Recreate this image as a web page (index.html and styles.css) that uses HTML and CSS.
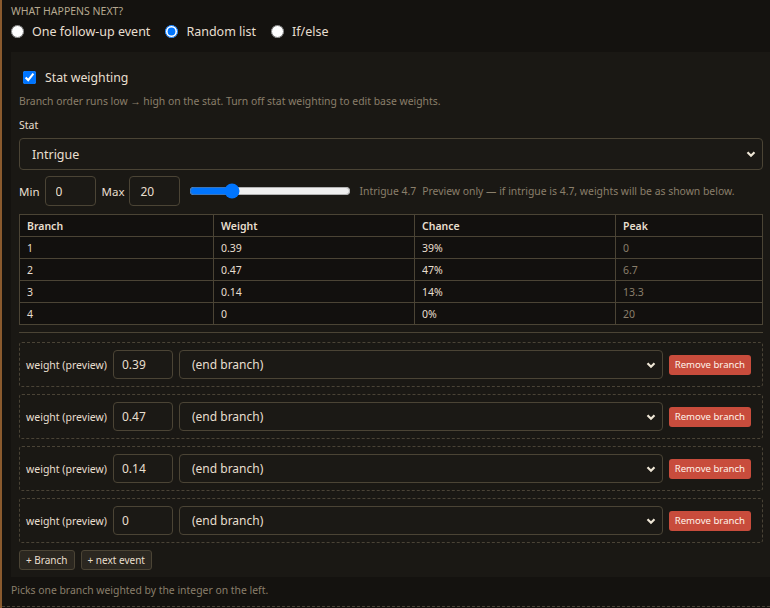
FILE: index.html
```html
<!DOCTYPE html>
<html lang="en">
<head>
    <meta charset="UTF-8">
    <title>Next step</title>
    <link rel="stylesheet" href="styles.css">
</head>
<body>
    <div class="next">
        <div class="heading">What happens next?</div>
        <div class="choices">
            <label><input type="radio" name="mode"> One follow-up event</label>
            <label><input type="radio" name="mode" checked> Random list</label>
            <label><input type="radio" name="mode"> If/else</label>
        </div>

        <div class="panel">
            <label class="check-row"><input type="checkbox" checked> Stat weighting</label>
            <div class="hint">Branch order runs low → high on the stat. Turn off stat weighting to edit base weights.</div>

            <div class="field-label">Stat</div>
            <select class="select big">
                <option>Intrigue</option>
            </select>

            <div class="range-row">
                <span>Min</span>
                <input class="input small" type="text" value="0">
                <span>Max</span>
                <input class="input small" type="text" value="20">
                <input class="range" type="range" min="0" max="20" step="0.1" value="4.7">
                <span class="muted">Intrigue 4.7</span>
                <span class="muted">Preview only — if intrigue is 4.7, weights will be as shown below.</span>
            </div>

            <table class="weights">
                <colgroup>
                    <col class="c1"><col class="c2"><col class="c3"><col class="c4">
                </colgroup>
                <thead>
                    <tr><th>Branch</th><th>Weight</th><th>Chance</th><th>Peak</th></tr>
                </thead>
                <tbody>
                    <tr><td>1</td><td>0.39</td><td>39%</td><td class="peak">0</td></tr>
                    <tr><td>2</td><td>0.47</td><td>47%</td><td class="peak">6.7</td></tr>
                    <tr><td>3</td><td>0.14</td><td>14%</td><td class="peak">13.3</td></tr>
                    <tr><td>4</td><td>0</td><td>0%</td><td class="peak">20</td></tr>
                </tbody>
            </table>

            <hr class="sep">

            <div class="branches">
                <div class="branch">
                    <span class="branch-label">weight (preview)</span>
                    <input class="input weight" type="text" value="0.39">
                    <select class="select target"><option>(end branch)</option></select>
                    <button class="remove">Remove branch</button>
                </div>
                <div class="branch">
                    <span class="branch-label">weight (preview)</span>
                    <input class="input weight" type="text" value="0.47">
                    <select class="select target"><option>(end branch)</option></select>
                    <button class="remove">Remove branch</button>
                </div>
                <div class="branch">
                    <span class="branch-label">weight (preview)</span>
                    <input class="input weight" type="text" value="0.14">
                    <select class="select target"><option>(end branch)</option></select>
                    <button class="remove">Remove branch</button>
                </div>
                <div class="branch">
                    <span class="branch-label">weight (preview)</span>
                    <input class="input weight" type="text" value="0">
                    <select class="select target"><option>(end branch)</option></select>
                    <button class="remove">Remove branch</button>
                </div>
            </div>

            <div class="actions">
                <button class="small-btn">+ Branch</button>
                <button class="small-btn">+ next event</button>
            </div>
        </div>

        <div class="footnote">Picks one branch weighted by the integer on the left.</div>
    </div>
</body>
</html>
```

FILE: styles.css
```css
html, body {
    margin: 0;
    padding: 0;
    height: 100%;
}

body {
    background: #14120f;
    border-left: 2px solid #8a5a2e;
    color: #e8dfcf;
    font-family: "Noto Sans", "Open Sans", sans-serif;
    font-size: 12px;
    overflow: hidden;
}

.next {
    padding-left: 9px;
    border-bottom: 1px dashed #4a4336;
    height: 606px;
}

.heading {
    padding-top: 4px;
    font-size: 10.5px;
    line-height: 14px;
    text-transform: uppercase;
    color: #b5a88f;
}

.choices {
    display: flex;
    align-items: center;
    gap: 15px;
    height: 22px;
    margin-top: 2px;
    font-size: 12.5px;
}

.choices label {
    display: flex;
    align-items: center;
    gap: 8px;
}

.choices input {
    margin: 0;
    width: 13px;
    height: 13px;
}

/* panel with the random list */
.panel {
    background: #1a1814;
    margin-top: 10px;
    padding: 14px 7px 7px 8px;
}

.check-row {
    display: flex;
    align-items: center;
    gap: 9px;
    height: 22px;
    padding-left: 4px;
    font-size: 12.3px;
}

.check-row input {
    margin: 0;
    width: 13px;
    height: 13px;
}

.hint {
    margin-top: 6px;
    font-size: 10.4px;
    line-height: 14px;
    color: #8a7f6b;
}

.field-label {
    margin-top: 10px;
    font-size: 10.5px;
    line-height: 14px;
}

.select {
    appearance: none;
    background: #1b1915 url("data:image/svg+xml;utf8,<svg xmlns='http://www.w3.org/2000/svg' width='10' height='10' viewBox='0 0 10 10'><path d='M1.5 3.2l3.5 3.5 3.5-3.5' fill='none' stroke='%23ece4d4' stroke-width='2.2'/></svg>") no-repeat right 6px center;
    border: 1px solid #4b4435;
    border-radius: 4px;
    color: #e8dfcf;
    font-family: inherit;
    box-sizing: border-box;
}

.select.big {
    display: block;
    width: 100%;
    height: 32px;
    margin-top: 6px;
    padding: 0 12px;
    font-size: 12.5px;
}

.input {
    background: #1b1915;
    border: 1px solid #4b4435;
    border-radius: 4px;
    color: #e8dfcf;
    font-family: inherit;
    box-sizing: border-box;
    margin: 0;
}

.range-row {
    display: flex;
    align-items: center;
    height: 30px;
    margin-top: 6px;
    font-size: 11.5px;
    white-space: nowrap;
}

.input.small {
    width: 51px;
    height: 30px;
    padding: 0 10px;
    font-size: 12px;
    margin: 0 6px 0 5px;
}

.range {
    width: 162px;
    margin: 0 8px 0 3px;
}

.muted {
    font-size: 10.4px;
    color: #8a7f6b;
    margin-right: 6px;
}

/* weights table */
.weights {
    width: 100%;
    margin-top: 8px;
    border-collapse: collapse;
    table-layout: fixed;
    background: #12100e;
    font-size: 10.5px;
}

.weights .c1 { width: 194px; }
.weights .c2 { width: 201px; }
.weights .c3 { width: 201px; }

.weights th,
.weights td {
    border: 1px solid #4b4435;
    height: 21px;
    padding: 0 7px;
    text-align: left;
}

.weights th {
    font-weight: 600;
}

.weights .peak {
    color: #8a7f6b;
}

.sep {
    border: 0;
    border-top: 1px solid #4b4435;
    margin: 7px 0 9px;
}

.branches {
    display: flex;
    flex-direction: column;
    gap: 7px;
}

.branch {
    display: flex;
    align-items: center;
    gap: 6px;
    border: 1px dashed #4a4336;
    border-radius: 3px;
    padding: 7px 11px 7px 6px;
}

.branch-label {
    font-size: 10.5px;
}

.input.weight {
    width: 60px;
    height: 29px;
    padding: 0 8px;
    font-size: 12px;
}

.select.target {
    flex: 1;
    height: 29px;
    padding: 0 12px;
    font-size: 12px;
}

.remove {
    background: #c84c3c;
    color: #fff3ea;
    border: none;
    border-radius: 3px;
    height: 20px;
    padding: 0 6px;
    font-family: inherit;
    font-size: 9.6px;
}

.actions {
    display: flex;
    gap: 6px;
    margin-top: 7px;
}

.small-btn {
    background: #2b2720;
    color: #e8dfcf;
    border: 1px solid #4b4435;
    border-radius: 3px;
    height: 20px;
    padding: 0 6px;
    font-family: inherit;
    font-size: 10px;
}

.footnote {
    margin-top: 6px;
    font-size: 10.4px;
    line-height: 14px;
    color: #8a7f6b;
}
```
